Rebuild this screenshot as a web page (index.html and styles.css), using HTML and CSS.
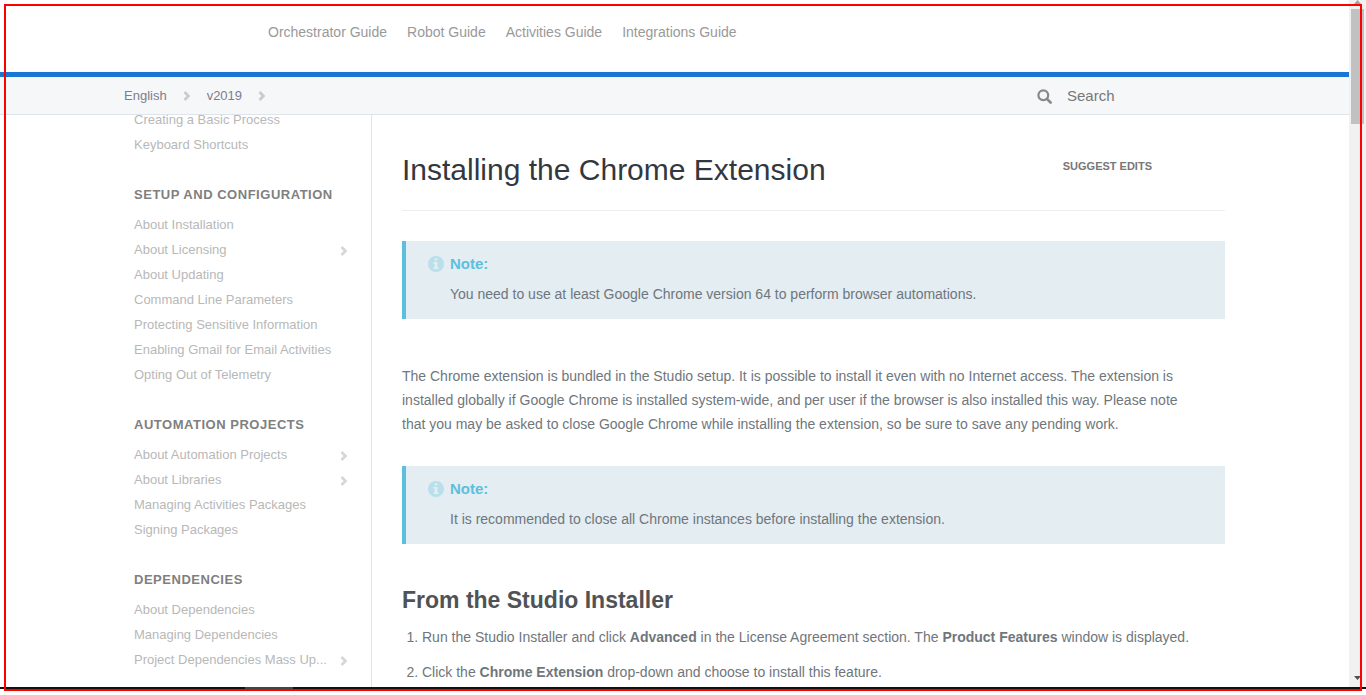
FILE: index.html
```html
<!DOCTYPE html>
<html lang="en">
<head>
<meta charset="utf-8">
<title>Installing the Chrome Extension</title>
<link rel="stylesheet" href="styles.css">
</head>
<body>
<svg class="symbols" aria-hidden="true">
  <symbol id="chevron" viewBox="0 0 8 10"><path d="M1.500 1 5.500 5 1.500 9" fill="none" stroke="currentColor" stroke-width="2.600"/></symbol>
  <symbol id="info" viewBox="0 0 16 16"><path fill="currentColor" fill-rule="evenodd" d="M8 0a8 8 0 1 1 0 16A8 8 0 0 1 8 0ZM6.700 2.300v2.200h2.600V2.300ZM5.300 6v1.600h1.300v3.800H5.300V13h5.400v-1.600H9.400V6Z"/></symbol>
</svg>
<div class="screen">
  <div class="page">
    <header class="topbar">
      <nav class="container guides">
        <a href="#">Orchestrator Guide</a>
        <a href="#">Robot Guide</a>
        <a href="#">Activities Guide</a>
        <a href="#">Integrations Guide</a>
      </nav>
    </header>
    <div class="subbar">
      <div class="container subbar-row">
        <nav class="crumbs">
          <a href="#">English</a><svg class="chevron"><use href="#chevron"/></svg>
          <a href="#">v2019</a><svg class="chevron"><use href="#chevron"/></svg>
        </nav>
        <label class="search">
          <svg class="search-icon" viewBox="0 0 15 15" aria-hidden="true"><circle cx="6.300" cy="6.200" r="4.900" fill="none" stroke="currentColor" stroke-width="2.200"/><path d="m9.900 9.800 3.700 3.700" stroke="currentColor" stroke-width="2.600" stroke-linecap="round"/></svg>
          <input type="search" placeholder="Search" aria-label="Search">
        </label>
      </div>
    </div>
    <div class="container body">
      <nav class="sidebar">
        <div class="sidebar-list">
          <ul>
            <li><a href="#">Creating a Basic Process</a></li>
            <li><a href="#">Keyboard Shortcuts</a></li>
          </ul>
          <h3>Setup and Configuration</h3>
          <ul>
            <li><a href="#">About Installation</a></li>
            <li><a href="#">About Licensing</a><svg class="chevron"><use href="#chevron"/></svg></li>
            <li><a href="#">About Updating</a></li>
            <li><a href="#">Command Line Parameters</a></li>
            <li><a href="#">Protecting Sensitive Information</a></li>
            <li><a href="#">Enabling Gmail for Email Activities</a></li>
            <li><a href="#">Opting Out of Telemetry</a></li>
          </ul>
          <h3>Automation Projects</h3>
          <ul>
            <li><a href="#">About Automation Projects</a><svg class="chevron"><use href="#chevron"/></svg></li>
            <li><a href="#">About Libraries</a><svg class="chevron"><use href="#chevron"/></svg></li>
            <li><a href="#">Managing Activities Packages</a></li>
            <li><a href="#">Signing Packages</a></li>
          </ul>
          <h3>Dependencies</h3>
          <ul>
            <li><a href="#">About Dependencies</a></li>
            <li><a href="#">Managing Dependencies</a></li>
            <li><a href="#">Project Dependencies Mass Up...</a><svg class="chevron"><use href="#chevron"/></svg></li>
          </ul>
        </div>
      </nav>
      <main class="content">
        <div class="title-row">
          <h1>Installing the Chrome Extension</h1>
          <a class="suggest" href="#">Suggest Edits</a>
        </div>
        <aside class="note">
          <div class="note-title"><svg class="info"><use href="#info"/></svg>Note:</div>
          <p>You need to use at least Google Chrome version 64 to perform browser automations.</p>
        </aside>
        <p class="intro">The Chrome extension is bundled in the Studio setup. It is possible to install it even with no Internet access. The extension is installed globally if Google Chrome is installed system-wide, and per user if the browser is also installed this way. Please note that you may be asked to close Google Chrome while installing the extension, so be sure to save any pending work.</p>
        <aside class="note">
          <div class="note-title"><svg class="info"><use href="#info"/></svg>Note:</div>
          <p>It is recommended to close all Chrome instances before installing the extension.</p>
        </aside>
        <h2>From the Studio Installer</h2>
        <ol class="steps">
          <li>Run the Studio Installer and click <strong>Advanced</strong> in the License Agreement section. The <strong>Product Features</strong> window is displayed.</li>
          <li>Click the <strong>Chrome Extension</strong> drop-down and choose to install this feature.</li>
        </ol>
      </main>
    </div>
  </div>
  <div class="scrollbar" aria-hidden="true">
    <svg class="arrow arrow-up" viewBox="0 0 7 4"><path d="M0 4 3.500 0 7 4Z"/></svg>
    <div class="thumb"></div>
    <svg class="arrow arrow-down" viewBox="0 0 7 4"><path d="M0 0h7L3.500 4Z"/></svg>
  </div>
</div>
<div class="taskbar"><div class="task"></div></div>
<div class="frame"></div>
</body>
</html>
```
FILE: styles.css
```css
* { box-sizing: border-box; }
body {
  margin: 0;
  height: 100vh;
  display: flex;
  flex-direction: column;
  overflow: hidden;
  padding-bottom: 6px;
  background: #fff;
  font-family: "Liberation Sans", Arial, sans-serif;
  font-size: 14px;
  line-height: 24px;
  color: #6f767c;
}
a { color: inherit; text-decoration: none; }
ul, ol, h1, h2, h3, p { margin: 0; padding: 0; }
ul { list-style: none; }
.symbols { position: absolute; width: 0; height: 0; }
.screen { flex: 1; min-height: 0; display: flex; }
.page { flex: 1; min-width: 0; display: flex; flex-direction: column; overflow: hidden; }
.container { width: 100%; max-width: 1101px; margin: 0 auto; }

.topbar { flex: none; height: 77px; padding-top: 20px; border-bottom: 5px solid #1976d2; }
.guides { display: flex; gap: 20px; padding-left: 144px; color: #999; }
.subbar { flex: none; background: #f6f7f9; border-bottom: 1px solid #dde4ea; }
.subbar-row { display: flex; justify-content: space-between; align-items: center; height: 37px; }
.crumbs { display: flex; align-items: center; gap: 16px; font-size: 13px; color: #7e7c8e; }
.chevron { flex: none; width: 8px; height: 10px; color: #c8cbce; }
.search { display: flex; align-items: center; gap: 15px; width: 188px; padding-top: 1px; color: #888; }
.search-icon { flex: none; width: 15px; height: 15px; }
.search input {
  width: 100%;
  min-width: 0;
  padding: 0;
  border: 0;
  outline: 0;
  background: none;
  font: 15px/24px "Liberation Sans", Arial, sans-serif;
  color: #777;
}
.search input::placeholder { color: #777; opacity: 1; }

.body { flex: 1; min-height: 0; display: flex; }
.sidebar { flex: none; width: 248px; padding: 0 23px 0 10px; border-right: 1px solid #e1e4e7; overflow: hidden; }
.sidebar-list { margin-top: -8px; font-size: 13px; line-height: 25px; color: #b8b8b8; }
.sidebar li { display: flex; align-items: center; justify-content: space-between; }
.sidebar .chevron { color: #d6d6d6; margin-top: 2px; }
.sidebar h3 { margin: 25px 0 5px; font-size: 13px; line-height: 25px; letter-spacing: 0.04em; text-transform: uppercase; color: #808080; }

.content { flex: 1; min-width: 0; padding: 30px 0 0 30px; overflow: hidden; }
.title-row { display: flex; align-items: flex-start; justify-content: space-between; height: 66px; padding: 5px 73px 0 0; border-bottom: 1px solid #eceeef; margin-bottom: 30px; }
h1 { font-size: 30px; line-height: 40px; font-weight: 400; color: #333840; }
.suggest { font-size: 11px; line-height: 32px; font-weight: 700; text-transform: uppercase; color: #777; }
.note { padding: 11px 20px 13px 44px; border-left: 4px solid #5bc0de; background: #e3edf2; }
.note-title { display: flex; align-items: center; gap: 6px; margin: 0 0 6px -22px; font-size: 15px; font-weight: 700; color: #5bc0de; }
.info { width: 16px; height: 16px; color: #b8dfea; }
.intro { margin: 45px 0 30px; padding-right: 40px; }
h2 { margin: 40px 0 9px; font-size: 23px; line-height: 32px; color: #505356; }
.steps { padding-left: 20px; }
.steps li { margin-bottom: 11px; }

.scrollbar { flex: none; display: flex; flex-direction: column; width: 17px; padding: 0 2px 7px; background: #f1f1f1; }
.arrow { width: 7px; height: 4px; margin-left: 3px; }
.arrow-up { fill: #a3a3a3; }
.arrow-down { margin-top: auto; fill: #505050; }
.thumb { width: 13px; height: 115px; margin-top: 5px; background: #c1c1c1; }
.taskbar { flex: none; height: 2px; padding-left: 245px; background: #111; }
.task { width: 48px; height: 2px; background: #444; }
.frame { position: fixed; inset: 4px; border: 2px solid #f00; pointer-events: none; }
```
